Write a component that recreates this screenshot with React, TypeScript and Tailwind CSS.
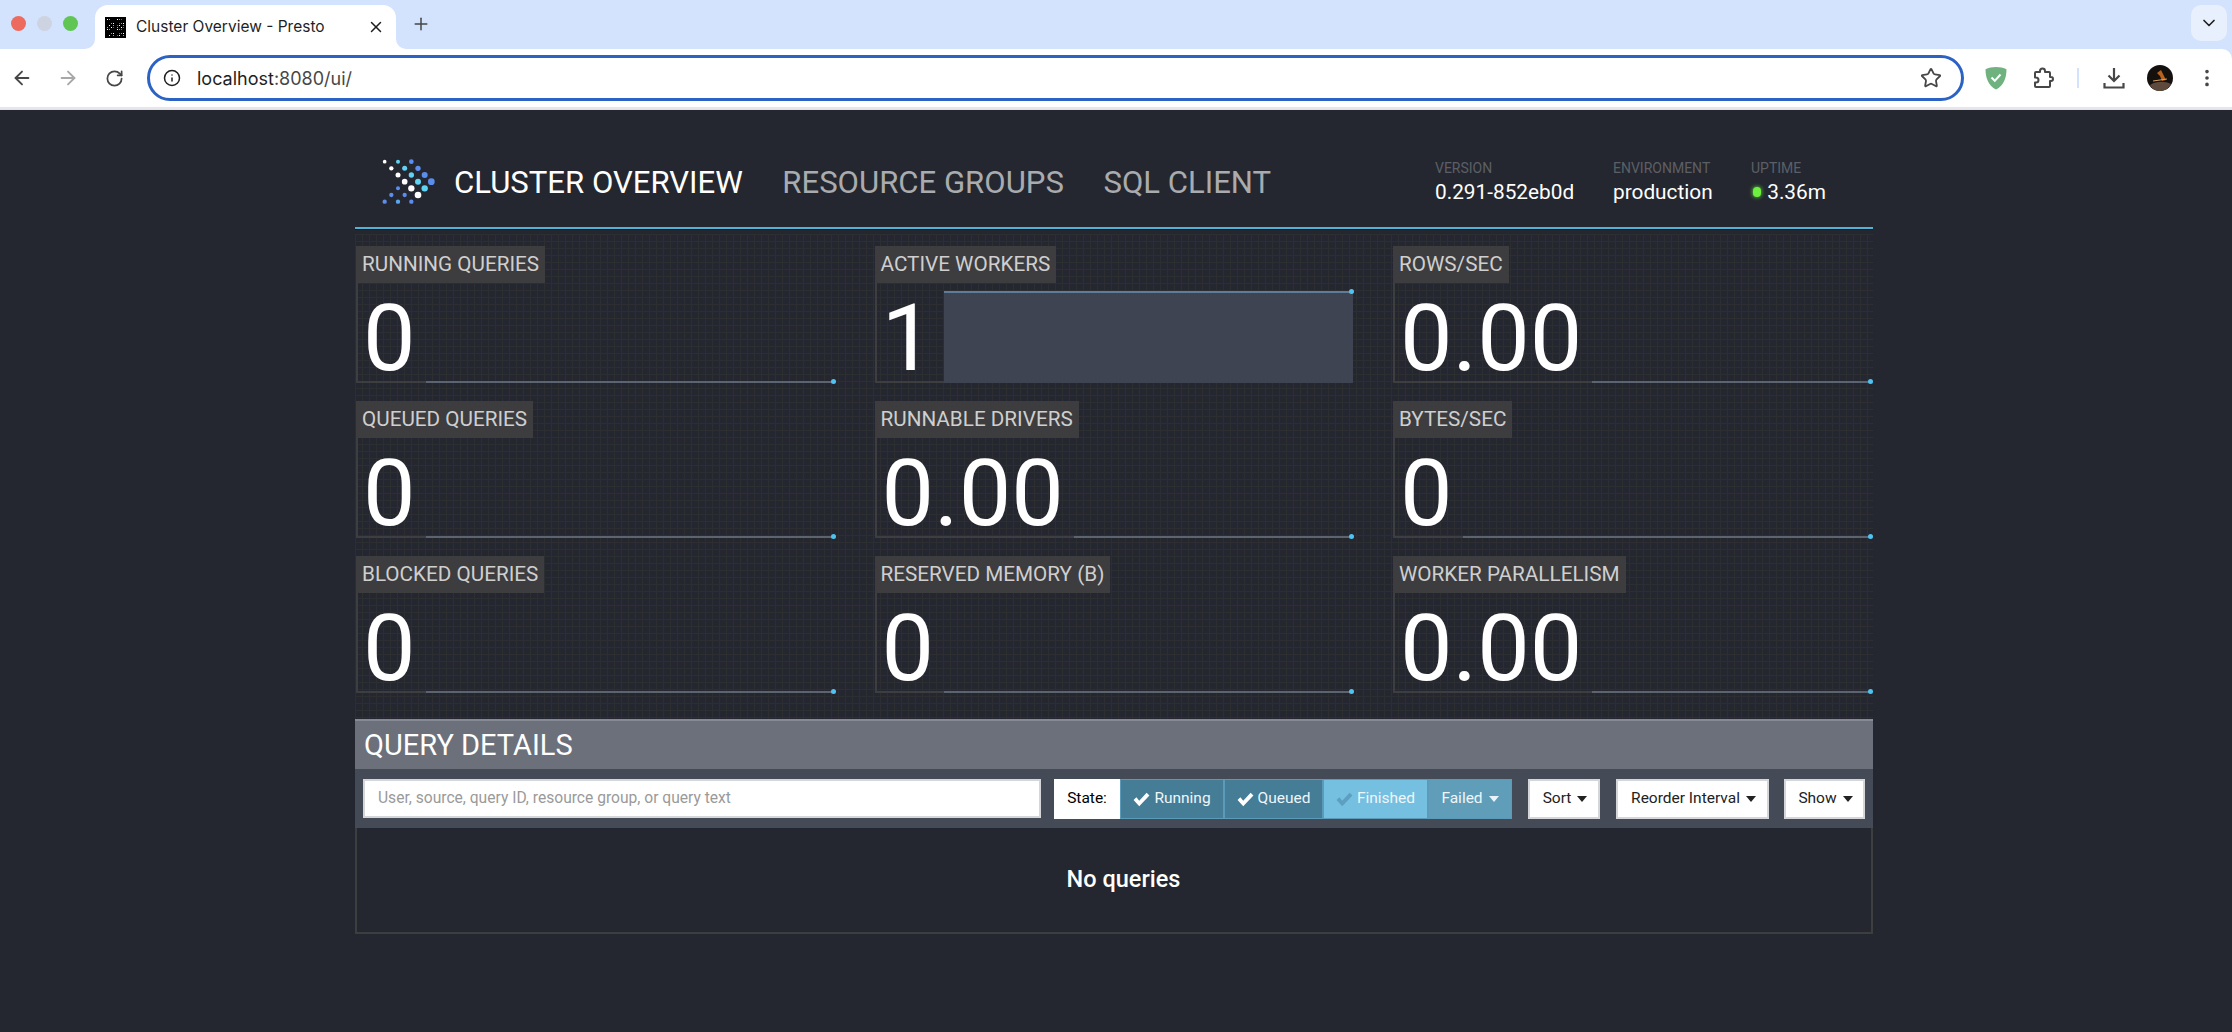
import React from "react";
import { ArrowLeft, ArrowRight, RotateCw, Info, Star, X, Plus, ChevronDown, EllipsisVertical } from "lucide-react";

const W = "#ffffff", C = "#5fd3f5", B = "#5b8def";
const logoDots: [number, number, number, string][] = [
  [44, 50, 5.5, W], [84, 50, 6, C], [124, 50, 7, B],
  [64, 70, 6.5, W], [104, 70, 7.5, C], [144, 70, 8, B],
  [84, 90, 7.5, W], [124, 90, 8, C], [164, 90, 9, B],
  [104, 110, 8.5, W], [144, 110, 9, C], [184, 110, 10, B],
  [84, 130, 6, B], [124, 130, 9.5, W], [164, 130, 9.5, C],
  [64, 150, 6.5, B], [104, 150, 6.5, B], [144, 150, 10, W],
  [44, 170, 6.5, B], [84, 170, 6.5, "#58a8f0"], [124, 170, 6.5, B],
];

function Logo() {
  return (
    <svg width="80" height="70" viewBox="0 0 240 210" className="shrink-0">
      {logoDots.map(([x, y, r, f], i) => (
        <circle key={i} cx={x} cy={y} r={r} fill={f} />
      ))}
    </svg>
  );
}

function Favicon() {
  const dots: [number, number, string][] = [];
  for (let y = 0; y < 9; y++) {
    for (let x = 0; x < 9; x++) {
      const v = (x * 7 + y * 13 + x * y * 3) % 5;
      if (v === 0) dots.push([x, y, "#ffffff"]);
      else if (v === 2) dots.push([x, y, "#4fb8ea"]);
      else if (v === 4 && x > 2) dots.push([x, y, "#3f6fd0"]);
    }
  }
  return (
    <svg width="21" height="21" viewBox="0 0 21 21" className="shrink-0">
      <rect width="21" height="21" fill="#000" />
      {dots.map(([x, y, f], i) => (
        <rect key={i} x={2 + x * 2} y={2 + y * 2} width="1" height="1" fill={f} />
      ))}
    </svg>
  );
}

function Shield() {
  return (
    <svg width="22" height="24" viewBox="0 0 22 24">
      <path d="M11 1C7 1 3.500 1.800 0.500 3.200C0.500 12 3.500 19.500 11 23.500C18.500 19.500 21.500 12 21.500 3.200C18.500 1.800 15 1 11 1Z" fill="#6fb27f" />
      <path d="M6.500 11.500L9.800 14.800L15.500 8.500" fill="none" stroke="#fff" strokeWidth="2" />
    </svg>
  );
}

function PuzzleIcon() {
  return (
    <svg width="24" height="24" viewBox="0 0 24 24" fill="none" stroke="currentColor" strokeWidth="2" strokeLinejoin="round">
      <path d="M5 6H9V5a2.500 2.500 0 0 1 5 0V6H18a1 1 0 0 1 1 1V11H20a2 2 0 0 1 0 4H19V20a1 1 0 0 1-1 1H5a1 1 0 0 1-1-1V16.500H5a2.500 2.500 0 0 0 0-5H4V7a1 1 0 0 1 1-1Z" />
    </svg>
  );
}

function DownloadIcon() {
  return (
    <svg width="24" height="24" viewBox="0 0 24 24" fill="none" stroke="currentColor" strokeWidth="2.200">
      <path d="M12 2V15M6.500 9.500L12 15L17.500 9.500M2.500 17V21.500H21.500V17" />
    </svg>
  );
}

function Avatar() {
  return (
    <svg width="26" height="26" viewBox="0 0 26 26">
      <circle cx="13" cy="13" r="13" fill="#14100e" />
      <path d="M3 20C9 16 18 16 24 19C21 24 17 26 13 26C9 26 5 24 3 20Z" fill="#5d4a3d" />
      <path d="M10 8L14 5L16 9L19 15L15 16L13 11Z" fill="#b8621d" />
      <path d="M6 16L20 14" stroke="#d8a060" strokeWidth="1" />
    </svg>
  );
}

function Check({ className }: { className: string }) {
  return (
    <svg width="17" height="15" viewBox="0 0 15 13" className={className}>
      <path d="M0.500 7L3 4.500L5.500 7.500L12 0.500L14.500 3L5.500 12.500Z" fill="currentColor" />
    </svg>
  );
}

function Caret({ color }: { color: string }) {
  return <span className={`ml-[6px] inline-block h-0 w-0 border-x-[5px] border-t-[6px] border-x-transparent ${color}`} />;
}

function Spark({ filled }: { filled?: boolean }) {
  return (
    <div className="relative mt-auto h-[92px] flex-1">
      {filled ? (
        <div className="h-full border-t-2 border-[#5f7c99] bg-[#3e4451]" />
      ) : (
        <div className="absolute inset-x-0 bottom-0 h-[2px] bg-[#5c6470]" />
      )}
      <span className={`absolute right-[-1px] h-[5px] w-[5px] rounded-full bg-[#4fc3f0] ${filled ? "top-[-2px]" : "bottom-[-1px]"}`} />
    </div>
  );
}

function Stat({ label, value, filled }: { label: string; value: string; filled?: boolean }) {
  return (
    <div className="flex h-[137px] flex-col border-b-2 border-l-2 border-[#3d3e40]">
      <div className="-ml-[2px] h-[37px] self-start bg-[#3d3d3f] px-[6px] text-[20.7px] leading-[37px] text-[#cfcfcf]">{label}</div>
      <div className="flex h-[100px] items-start">
        <div className="h-[100px] pl-[5px] pr-[10px] pt-[8px] text-[93.5px] leading-[94px] font-normal text-white">{value}</div>
        <Spark filled={filled} />
      </div>
    </div>
  );
}

function Meta({ label, children }: { label: string; children: React.ReactNode }) {
  return (
    <div className="-mt-[2px] flex flex-col">
      <div className="text-[14px] leading-[18px] text-[#5c5f66]">{label}</div>
      <div className="mt-[2px] flex items-center whitespace-nowrap text-[20.8px] leading-[26px] text-white">{children}</div>
    </div>
  );
}

function StateBtn({ label, bg, check, caret }: { label: string; bg: string; check?: string; caret?: boolean }) {
  return (
    <div className={`flex h-full items-center justify-center border border-[#5b9ab8] pt-px text-[15.5px] ${bg}`}>
      {check && <Check className={`mr-[4px] ${check}`} />}
      <span>{label}</span>
      {caret && <Caret color="border-t-[#e8f4fa]" />}
    </div>
  );
}

function WhiteBtn({ label, width }: { label: string; width: string }) {
  return (
    <div className={`flex h-[40px] items-center justify-center border-2 border-[#d5d6d9] bg-white pl-[2px] pt-px text-[15.5px] text-[#222] ${width}`}>
      {label}
      <Caret color="border-t-[#222]" />
    </div>
  );
}

export default function App() {
  return (
    <div className="min-h-screen bg-[#24272f] [font-family:Roboto,sans-serif]">
      {/* Browser chrome */}
      <div className="h-[110px] bg-[#d3e3fd] [font-family:Inter,sans-serif]">
        <div className="flex h-[49px] items-start">
          <div className="flex h-[46px] w-[95px] items-center gap-[11px] pl-[11px]">
            <span className="h-[15px] w-[15px] rounded-full bg-[#ed6a5e]" />
            <span className="h-[15px] w-[15px] rounded-full bg-[#cdd3e0]" />
            <span className="h-[15px] w-[15px] rounded-full bg-[#61c554]" />
          </div>
          <div className="relative mt-[5px] flex h-[44px] w-[301px] items-center rounded-t-[13px] bg-white pl-[10px] pr-[11px]">
            <span className="absolute bottom-0 left-[-10px] h-[10px] w-[10px] bg-white">
              <span className="block h-full w-full rounded-br-[10px] bg-[#d3e3fd]" />
            </span>
            <span className="absolute bottom-0 right-[-10px] h-[10px] w-[10px] bg-white">
              <span className="block h-full w-full rounded-bl-[10px] bg-[#d3e3fd]" />
            </span>
            <Favicon />
            <span className="ml-[10px] flex-1 text-[15.5px] text-[#1f1f1f]">Cluster Overview - Presto</span>
            <X size={18} strokeWidth={2} className="text-[#1f1f1f]" />
          </div>
          <Plus size={20} strokeWidth={1.8} className="ml-[15px] mt-[14px] text-[#444746]" />
          <div className="ml-auto mr-[5px] mt-[5px] flex h-[36px] w-[36px] items-center justify-center rounded-[10px] bg-[#e9f0fd]">
            <ChevronDown size={20} strokeWidth={2} className="text-[#1f1f1f]" />
          </div>
        </div>
        <div className="flex h-[60px] items-center rounded-tr-[10px] border-b-2 border-[#e6e7ea] bg-white text-[#474747]">
          <ArrowLeft size={22} strokeWidth={2} className="ml-[11px]" />
          <ArrowRight size={22} strokeWidth={2} className="ml-[24px] text-[#a8a8a8]" />
          <RotateCw size={19} strokeWidth={2.2} className="ml-[26px]" />
          <div className="ml-[23px] flex h-[46px] w-[1817px] items-center rounded-full border-[3px] border-[#2b62c4] bg-white pl-[13px] pr-[19px]">
            <Info size={18} strokeWidth={2} className="text-[#1f1f1f]" />
            <span className="ml-[16px] text-[18px] text-[#1f1f1f]">localhost<span className="text-[#474747]">:8080/ui/</span></span>
            <Star size={22} strokeWidth={2} className="ml-auto" />
          </div>
          <div className="ml-[21px]"><Shield /></div>
          <div className="ml-[24px]"><PuzzleIcon /></div>
          <span className="ml-[22px] h-[20px] w-[2px] bg-[#d3e3fd]" />
          <div className="ml-[23px]"><DownloadIcon /></div>
          <div className="ml-[21px] flex"><Avatar /></div>
          <EllipsisVertical size={22} strokeWidth={2} className="ml-[23px]" />
        </div>
      </div>

      {/* Page */}
      <div className="ml-[355px] w-[1518px]">
        <div className="flex h-[119px] items-center border-b-2 border-[#4fb3d4] pt-[29px] shadow-[0_1px_0_#14161a]">
          <div className="ml-[15px] -mt-[6px]"><Logo /></div>
          <div className="ml-[4px] flex items-center gap-[39.5px] text-[31.1px] text-[#a9abae]">
            <span className="text-white">CLUSTER OVERVIEW</span>
            <span>RESOURCE GROUPS</span>
            <span>SQL CLIENT</span>
          </div>
          <div className="ml-auto mr-[47px] flex gap-[40px]">
            <div className="w-[138px]"><Meta label="VERSION">0.291-852eb0d</Meta></div>
            <div className="w-[98px]"><Meta label="ENVIRONMENT">production</Meta></div>
            <div className="w-[75px]">
              <Meta label="UPTIME">
                <span className="ml-[2px] mr-[6px] h-[10px] w-[10px] rounded-full bg-[#6ef03f] shadow-[0_0_4px_#6ef03f]" />
                3.36m
              </Meta>
            </div>
          </div>
        </div>

        <div className="mt-[5px] grid grid-cols-[478.5px_478.5px_478.5px] gap-x-[40px] gap-y-[18px] bg-[linear-gradient(#2d2e32_1px,transparent_1px),linear-gradient(90deg,#2d2e32_1px,transparent_1px)] bg-[size:7px_7px] pb-[26px] pl-[1px] pt-[12px]">
          <Stat label="RUNNING QUERIES" value="0" />
          <Stat label="ACTIVE WORKERS" value="1" filled />
          <Stat label="ROWS/SEC" value="0.00" />
          <Stat label="QUEUED QUERIES" value="0" />
          <Stat label="RUNNABLE DRIVERS" value="0.00" />
          <Stat label="BYTES/SEC" value="0" />
          <Stat label="BLOCKED QUERIES" value="0" />
          <Stat label="RESERVED MEMORY (B)" value="0" />
          <Stat label="WORKER PARALLELISM" value="0.00" />
        </div>

        <div className="h-[50px] border-t-2 border-[#868a94] bg-[#6c707a] pl-[9px] text-[29px] leading-[48px] text-white">QUERY DETAILS</div>
        <div className="flex h-[59px] items-center bg-[#454a57] pl-[8px]">
          <div className="flex h-[39px] w-[678px] items-center border-2 border-[#d5d6d9] bg-white pl-[13px] pt-px text-[15.6px] text-[#9a9a9a]">
            User, source, query ID, resource group, or query text
          </div>
          <div className="ml-[13px] flex h-[40px]">
            <div className="flex w-[66px] items-center justify-center bg-white pt-px text-[15.5px] text-black">State:</div>
            <div className="w-[104px]"><StateBtn label="Running" bg="bg-[#457c96] text-[#eef6fa]" check="text-white" /></div>
            <div className="w-[99px]"><StateBtn label="Queued" bg="bg-[#457c96] text-[#eef6fa]" check="text-white" /></div>
            <div className="w-[105px]"><StateBtn label="Finished" bg="bg-[#75bfe0] text-[#eef6fa]" check="text-[#5c9fc0]" /></div>
            <div className="w-[84px]"><StateBtn label="Failed" bg="bg-[#609db9] text-[#eef6fa]" caret /></div>
          </div>
          <div className="ml-[16px]"><WhiteBtn label="Sort" width="w-[72px]" /></div>
          <div className="ml-[16px]"><WhiteBtn label="Reorder Interval" width="w-[153px]" /></div>
          <div className="ml-[15px]"><WhiteBtn label="Show" width="w-[81px]" /></div>
        </div>
        <div className="flex h-[106px] items-center justify-center border-x-2 border-b-2 border-[#3d3e40] pb-[1px] text-[23.5px] font-medium text-white">
          <span className="ml-[19px]">No queries</span>
        </div>
      </div>
    </div>
  );
}
